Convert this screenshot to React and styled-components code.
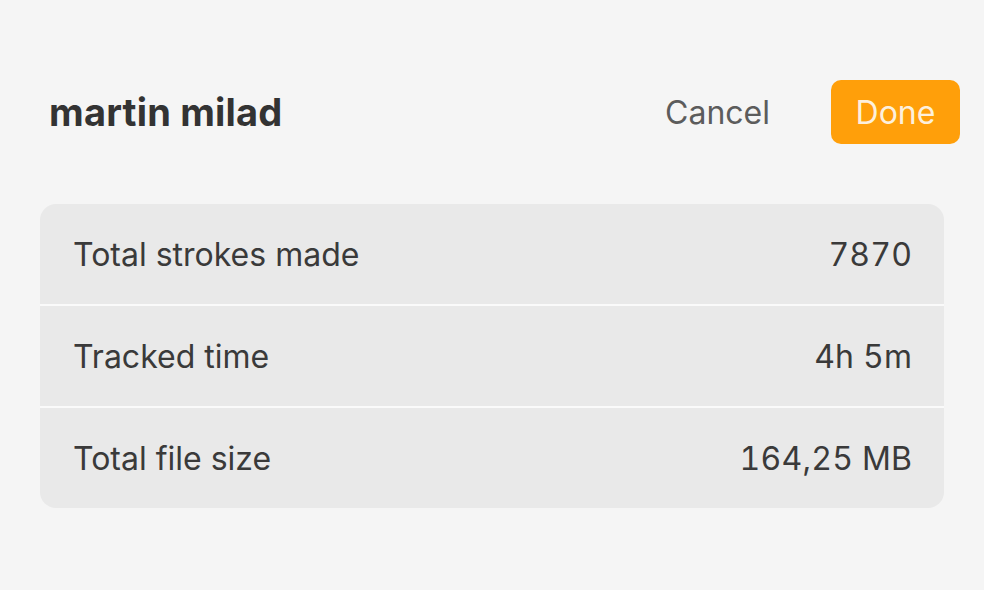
import React from "react";
import styled, { createGlobalStyle } from "styled-components";

const GlobalStyle = createGlobalStyle`
  html, body {
    margin: 0;
    padding: 0;
    background: #f5f5f5;
    font-family: Inter, "Liberation Sans", sans-serif;
  }
`;

const stats = [
  { label: "Total strokes made", value: "7870" },
  { label: "Tracked time", value: "4h 5m" },
  { label: "Total file size", value: "164,25 MB" },
];

function App() {
  return (
    <>
      <GlobalStyle />
      <Wrapper>
        <Header>
          <Title>martin milad</Title>
          <Actions>
            <CancelButton>Cancel</CancelButton>
            <DoneButton>Done</DoneButton>
          </Actions>
        </Header>
        <Card>
          {stats.map(({ label, value }) => (
            <Row key={label}>
              <Label>{label}</Label>
              <Value>{value}</Value>
            </Row>
          ))}
        </Card>
      </Wrapper>
    </>
  );
}

const Wrapper = styled.div`
  width: 984px;
  height: 590px;
  box-sizing: border-box;
  padding: 80px 40px 0 40px;
  background: #f5f5f5;
`;

const Header = styled.div`
  display: flex;
  align-items: center;
  justify-content: space-between;
  height: 64px;
  padding: 0 0 0 9px;
  margin-right: -16px;
`;

const Title = styled.h1`
  margin: 0;
  font-size: 38px;
  font-weight: 700;
  color: #333333;
  letter-spacing: 0.2px;
`;

const Actions = styled.div`
  display: flex;
  align-items: center;
  gap: 61px;
`;

const CancelButton = styled.button`
  border: none;
  background: none;
  padding: 0;
  font-family: inherit;
  font-size: 32px;
  color: #5c5c5c;
`;

const DoneButton = styled.button`
  border: none;
  width: 129px;
  height: 64px;
  border-radius: 10px;
  background: #ff9f0a;
  color: #fdf0dc;
  font-family: inherit;
  font-size: 32px;
`;

const Card = styled.div`
  margin-top: 60px;
  background: #e9e9e9;
  border-radius: 16px;
  overflow: hidden;
`;

const Row = styled.div`
  display: flex;
  align-items: center;
  justify-content: space-between;
  height: 100px;
  padding: 0 32px 0 33px;
  border-top: 2px solid #fafafa;

  &:first-child {
    border-top: none;
  }
`;

const Label = styled.span`
  font-size: 32px;
  color: #3a3a3a;
`;

const Value = styled.span`
  font-size: 32px;
  letter-spacing: 0.2px;
  font-variant-numeric: tabular-nums;
  color: #3a3a3a;
  margin-right: -0.2px;
`;

export default App;
